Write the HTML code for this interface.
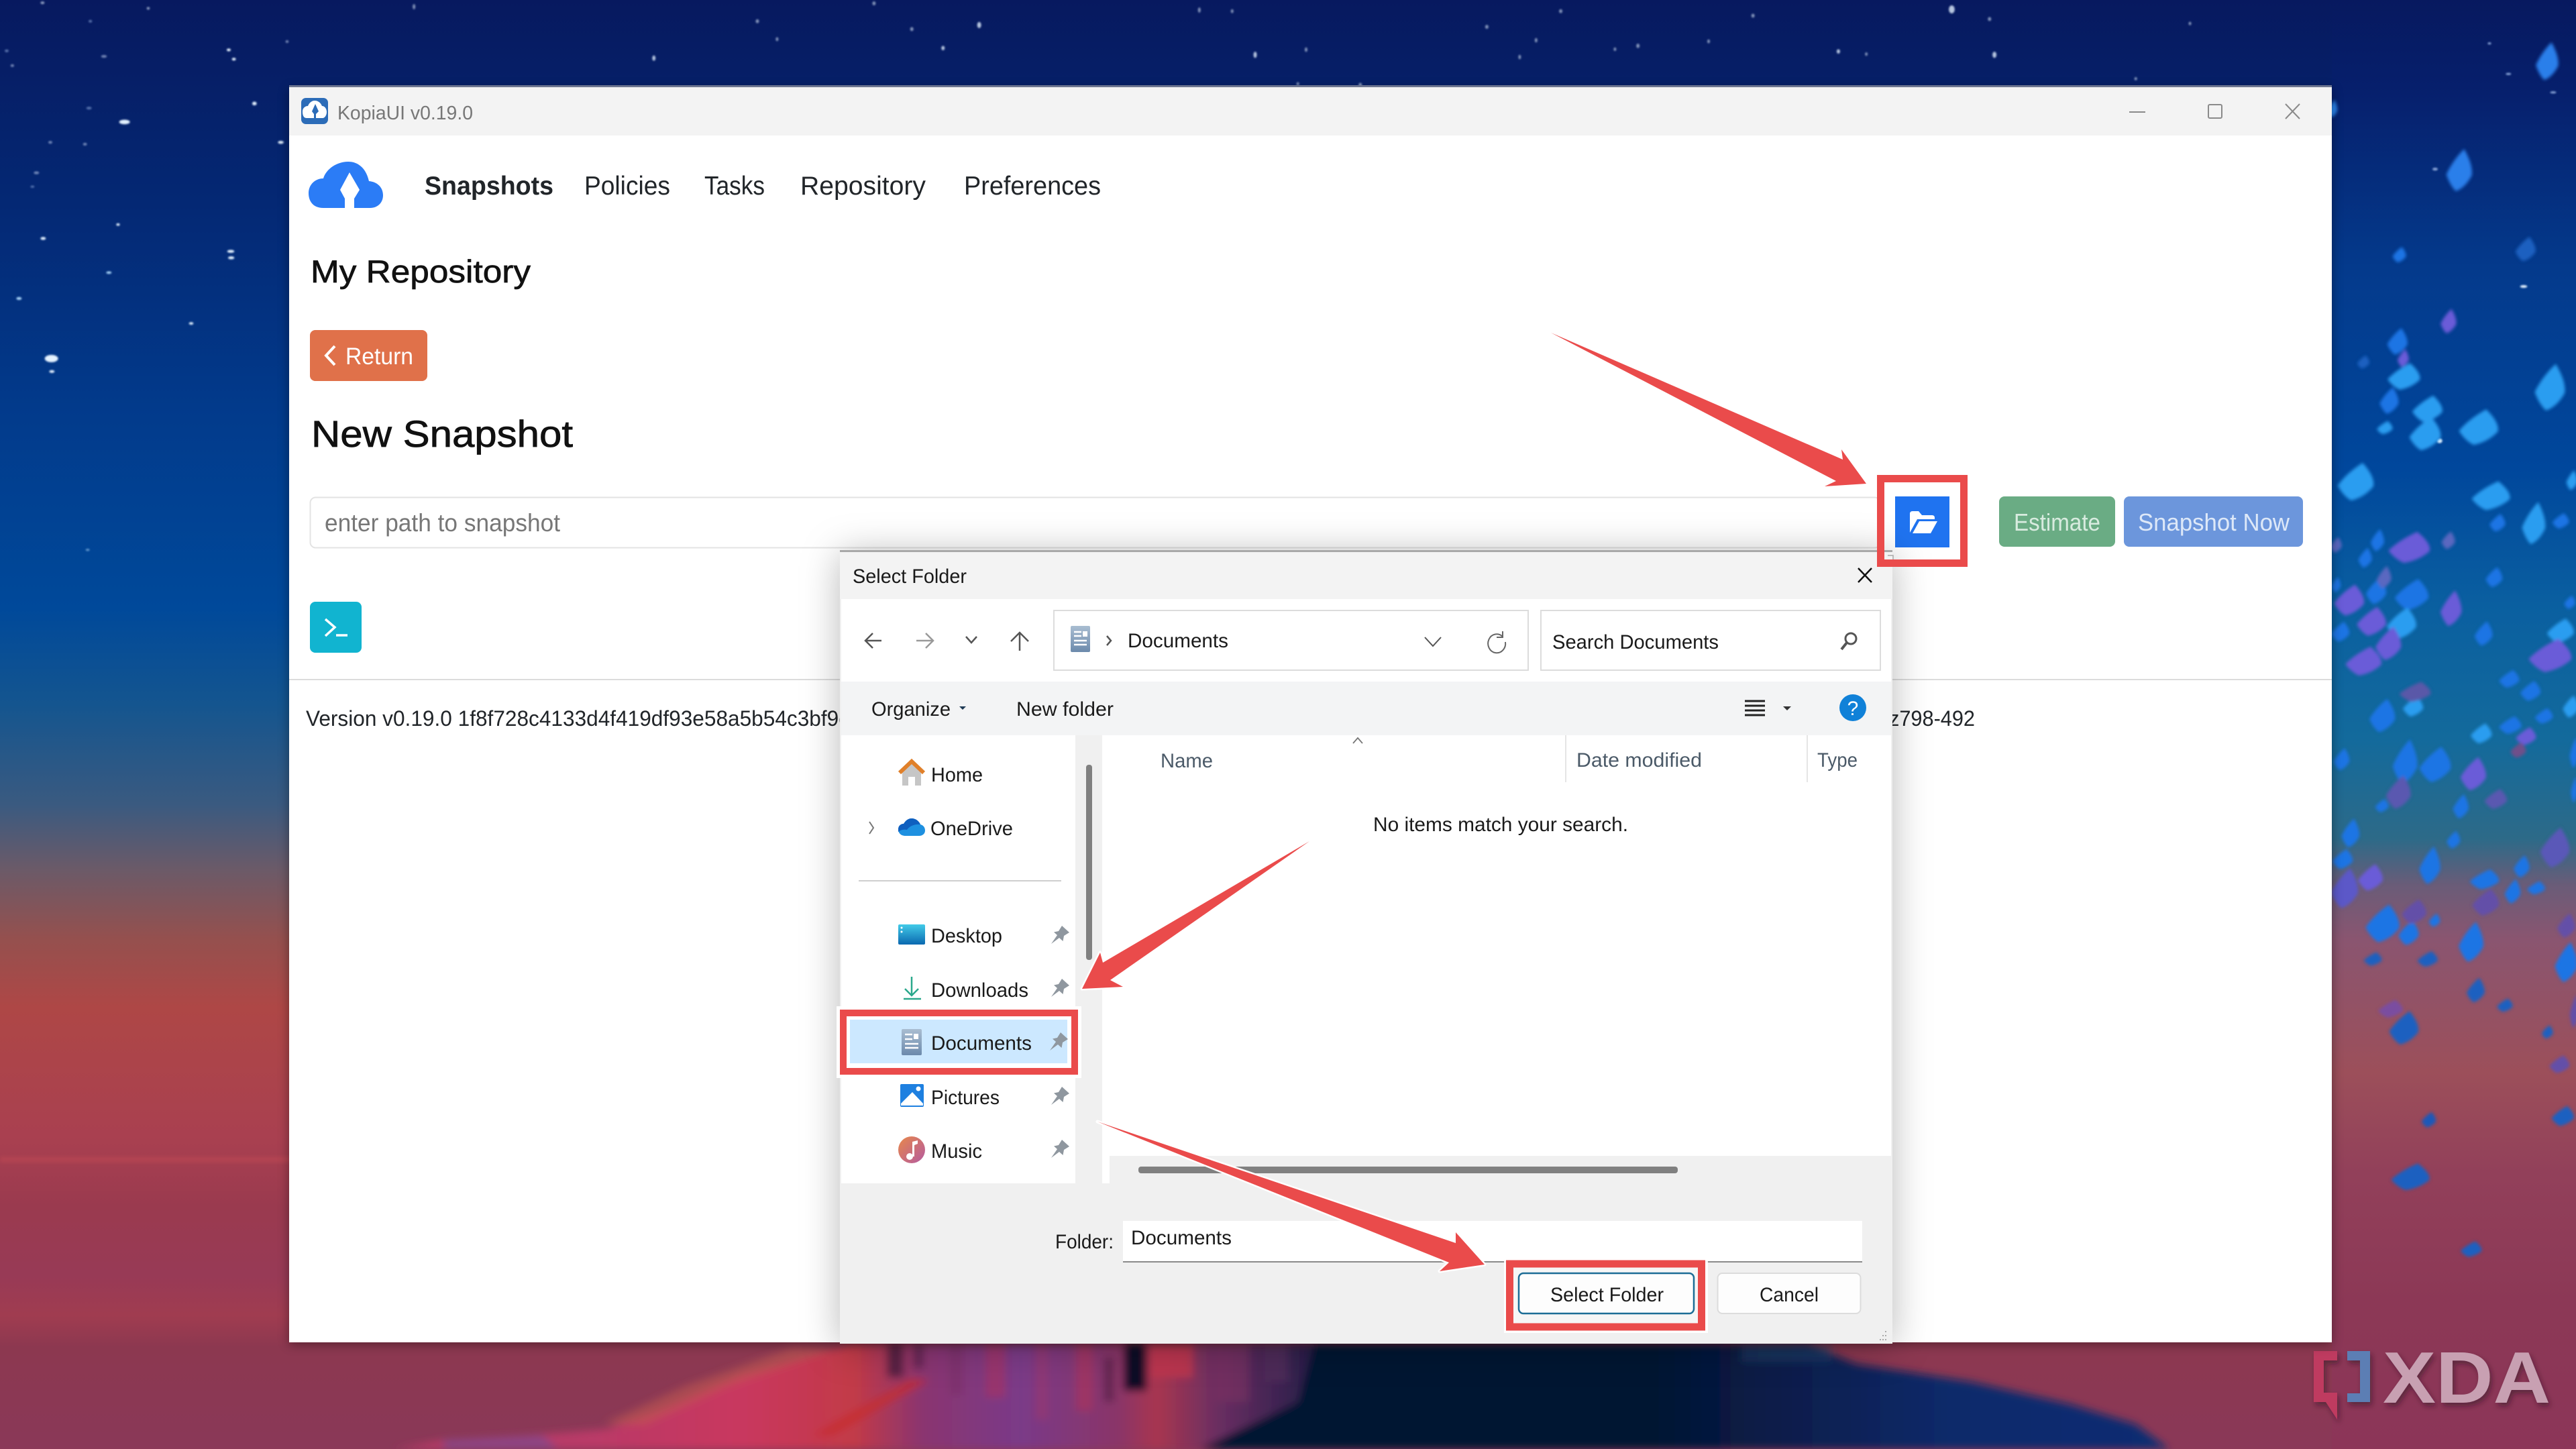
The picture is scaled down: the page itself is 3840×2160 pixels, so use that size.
<!DOCTYPE html>
<html lang="en"><head><meta charset="utf-8"><title>KopiaUI Select Folder</title>
<style>
html,body{margin:0;padding:0;background:#0a1a5c}
svg{display:block;font-family:"Liberation Sans",sans-serif}
.nav{font-size:39px;fill:#212529}
.d{font-size:30px;fill:#1a1a1a}
.h{font-size:30px;fill:#4b5a68}
</style></head><body>
<svg xmlns="http://www.w3.org/2000/svg" width="3840" height="2160" viewBox="0 0 3840 2160">
<defs>
<linearGradient id="bg" x1="0" y1="0" x2="0" y2="2160" gradientUnits="userSpaceOnUse">
<stop offset="0" stop-color="#07195f"/><stop offset=".14" stop-color="#042874"/><stop offset=".28" stop-color="#023a8b"/><stop offset=".42" stop-color="#00499a"/><stop offset=".486" stop-color="#14558f"/><stop offset=".555" stop-color="#3a5a80"/><stop offset=".6" stop-color="#6b5a68"/><stop offset=".648" stop-color="#95504e"/><stop offset=".695" stop-color="#ae4746"/><stop offset=".785" stop-color="#a94050"/><stop offset=".833" stop-color="#9a3a4f"/><stop offset=".88" stop-color="#983a56"/><stop offset=".908" stop-color="#a03c50"/><stop offset=".93" stop-color="#8c3850"/><stop offset="1" stop-color="#8a3858"/>
</linearGradient>
<linearGradient id="bgr" x1="0" y1="0" x2="0" y2="2160" gradientUnits="userSpaceOnUse">
<stop offset="0" stop-color="#07195f"/><stop offset=".06" stop-color="#061f6c"/><stop offset=".185" stop-color="#043a8c"/><stop offset=".324" stop-color="#00479c"/><stop offset=".417" stop-color="#0a5fa0"/><stop offset=".51" stop-color="#136a9c"/><stop offset=".579" stop-color="#2d6a88"/><stop offset=".611" stop-color="#6a5c78"/><stop offset=".648" stop-color="#8a5570"/><stop offset=".74" stop-color="#9c4f5a"/><stop offset=".81" stop-color="#92405a"/><stop offset=".9" stop-color="#8c3856"/><stop offset="1" stop-color="#8c3558"/>
</linearGradient>
<linearGradient id="vl" x1="350" x2="810" y1="0" y2="0" gradientUnits="userSpaceOnUse">
<stop offset="0" stop-color="#b83a68"/><stop offset=".22" stop-color="#c9385f"/><stop offset=".37" stop-color="#c23a48"/><stop offset=".46" stop-color="#8a3570"/><stop offset=".59" stop-color="#7a3a88"/><stop offset=".72" stop-color="#8a3568"/><stop offset=".77" stop-color="#a8364f"/><stop offset=".85" stop-color="#6a2e62"/><stop offset="1" stop-color="#1a1a44"/>
</linearGradient>
<linearGradient id="vn" x1="800" x2="1320" y1="0" y2="0" gradientUnits="userSpaceOnUse">
<stop offset="0" stop-color="#061230"/><stop offset=".4" stop-color="#051433"/><stop offset=".75" stop-color="#0c2a6b"/><stop offset="1" stop-color="#0f2d72"/>
</linearGradient>
<linearGradient id="doc" x1="0" y1="0" x2="0" y2="1"><stop offset="0" stop-color="#a9bdd1"/><stop offset="1" stop-color="#6c8aac"/></linearGradient>
<linearGradient id="desk" x1="0" y1="0" x2="0" y2="1"><stop offset="0" stop-color="#42cbe8"/><stop offset="1" stop-color="#0a68b0"/></linearGradient>
<linearGradient id="mus" x1="0" y1="0" x2="1" y2="1"><stop offset="0" stop-color="#e8884a"/><stop offset="1" stop-color="#b45aa0"/></linearGradient>
<filter id="b2" x="-20%" y="-20%" width="140%" height="140%"><feGaussianBlur stdDeviation="2.500"/></filter>
<filter id="b1" x="-5%" y="-5%" width="110%" height="110%"><feGaussianBlur stdDeviation="1.200"/></filter>
<filter id="b6" x="-5%" y="-5%" width="110%" height="110%"><feGaussianBlur stdDeviation="6"/></filter>
<filter id="b5" x="0" y="-50%" width="100%" height="200%"><feGaussianBlur stdDeviation="3"/></filter>
<filter id="sh" x="-10%" y="-10%" width="120%" height="120%"><feDropShadow dx="0" dy="4" stdDeviation="28" flood-color="#000" flood-opacity=".28"/></filter>
<filter id="ws" x="-5%" y="-5%" width="110%" height="110%"><feDropShadow dx="0" dy="3" stdDeviation="8" flood-color="#000" flood-opacity=".4"/></filter>
<filter id="ls" x="-10%" y="-10%" width="120%" height="130%"><feDropShadow dx="3" dy="5" stdDeviation="4" flood-color="#2a0a20" flood-opacity=".5"/></filter>
<path id="L" d="M.35-1.25Q1.05-.35.95.25Q.45.95-.3 1.15Q-.75.85-1.05.2Q-.55-.6.35-1.25Z"/>
<path id="pin" d="M0 27L9 14L4 9.500L11 8L16 0L27 10L19 15L17.500 23L12 18Z" fill="#8f979f"/>
</defs>

<!-- background -->
<rect width="3840" height="2160" fill="url(#bg)"/>
<rect x="3476" width="364" height="2160" fill="url(#bgr)"/>
<rect x="0" y="1724" width="3476" height="9" fill="#c44b54" opacity=".45" filter="url(#b5)"/>

<!-- volcano -->
<g filter="url(#b6)"><g transform="translate(0,1990) scale(2.449,.3333)">
<polygon points="520,40 450,180 400,340 370,420 320,450 270,470 240,510 810,510 810,40" fill="url(#vl)"/>
<polygon points="800,40 1100,40 1130,130 1200,210 1260,310 1300,400 1320,510 730,510 790,300" fill="url(#vn)"/>
<path d="M495 60L430 230L380 400" stroke="#c25a50" stroke-width="26" fill="none" opacity=".55"/>
<path d="M560 200L500 450" stroke="#c82a2a" stroke-width="12" fill="none" opacity=".7"/>
<rect x="684" y="40" width="14" height="210" fill="#0a0f26"/>
<rect x="700" y="40" width="26" height="150" fill="#c0364f" opacity=".85"/>
<rect x="540" y="40" width="10" height="150" fill="#3a1a38" opacity=".7"/>
<rect x="556" y="40" width="6" height="110" fill="#3a1a38" opacity=".5"/>
<rect x="578" y="40" width="8" height="230" fill="#7a3068" opacity=".6"/>
<rect x="600" y="40" width="12" height="240" fill="#a83560" opacity=".6"/>
<rect x="630" y="40" width="8" height="340" fill="#9a3a70" opacity=".6"/>
<rect x="655" y="40" width="10" height="300" fill="#b0355a" opacity=".55"/>
<rect x="672" y="100" width="6" height="200" fill="#4a2040" opacity=".6"/>
<rect x="740" y="40" width="20" height="260" fill="#7a3060" opacity=".6"/>
<rect x="770" y="40" width="14" height="170" fill="#56305e" opacity=".6"/>
<polygon points="270,470 330,450 340,510 270,510" fill="#7a4a90" opacity=".7"/>
<rect x="1060" y="40" width="55" height="80" fill="#2a4a70" opacity=".45"/>
</g></g>

<!-- stars -->
<g filter="url(#b1)" fill="#e4f2ff">
<g transform="scale(.3333,1.3776)">
<ellipse cx="557" cy="132" rx="24" ry="2.500"/><ellipse cx="230" cy="388" rx="30" ry="4"/><ellipse cx="232" cy="402" rx="12" ry="1.500"/><ellipse cx="1032" cy="272" rx="16" ry="1.600"/><ellipse cx="1034" cy="279" rx="14" ry="1.600"/><ellipse cx="193" cy="258" rx="12" ry="1.600"/><ellipse cx="85" cy="323" rx="12" ry="1.600" fill="#a5d0f5"/><ellipse cx="528" cy="243" rx="8" ry="1.400"/><ellipse cx="487" cy="295" rx="12" ry="1.400" fill="#a5d0f5"/><ellipse cx="855" cy="350" rx="10" ry="1.400"/><ellipse cx="1138" cy="112" rx="10" ry="2"/><ellipse cx="1256" cy="154" rx="13" ry="1.600"/><ellipse cx="1023" cy="54" rx="9" ry="1.500"/><ellipse cx="1046" cy="64" rx="9" ry="1.500"/><g opacity=".6"><ellipse cx="163" cy="187" rx="12" ry="1.500" fill="#b8c8e8"/><ellipse cx="225" cy="154" rx="9" ry="1.500" fill="#b8c8e8"/><ellipse cx="380" cy="156" rx="9" ry="1.500" fill="#b8c8e8"/><ellipse cx="465" cy="61" rx="13" ry="1.500" fill="#b8c8e8"/><ellipse cx="55" cy="71" rx="8" ry="1.500" fill="#b8c8e8"/><ellipse cx="392" cy="595" rx="9" ry="1.200" fill="#a5d0f5"/><ellipse cx="190" cy="3" rx="9" ry="1.500"/><ellipse cx="663" cy="9" rx="7" ry="1.500"/><ellipse cx="145" cy="202" rx="9" ry="1.200" fill="#8aa5d8"/><ellipse cx="398" cy="117" rx="12" ry="1.500" fill="#8aa5d8"/><ellipse cx="30" cy="55" rx="9" ry="1.500" fill="#8aa5d8"/><ellipse cx="1284" cy="45" rx="7" ry="1.500" fill="#b8c8e8"/><ellipse cx="404" cy="23" rx="8" ry="1.500" fill="#8aa5d8"/></g>
</g>
<g transform="scale(2.449,.3333)" opacity=".8">
<ellipse cx="1188" cy="42" rx="1.800" ry="18"/><ellipse cx="596" cy="112" rx="1.200" ry="14"/><ellipse cx="1214" cy="245" rx="1.200" ry="14"/><ellipse cx="764" cy="245" rx="1" ry="14"/><ellipse cx="398" cy="260" rx="1" ry="12"/><ellipse cx="574" cy="215" rx="1" ry="10"/><ellipse cx="1119" cy="230" rx="1" ry="10"/><g opacity=".7"><ellipse cx="905" cy="120" rx="1" ry="9"/><ellipse cx="997" cy="205" rx="1" ry="10"/><ellipse cx="1211" cy="85" rx="1" ry="9"/><ellipse cx="461" cy="95" rx="1" ry="9"/><ellipse cx="555" cy="130" rx="1" ry="9"/><ellipse cx="1067" cy="70" rx="1" ry="9"/><ellipse cx="950" cy="50" rx="1" ry="9"/><ellipse cx="532" cy="15" rx="1" ry="9"/><ellipse cx="828" cy="380" rx="1" ry="10"/><ellipse cx="790" cy="375" rx=".8" ry="8"/><ellipse cx="1136" cy="242" rx=".8" ry="8"/><ellipse cx="983" cy="220" rx=".8" ry="8"/><ellipse cx="935" cy="180" rx=".8" ry="10"/><ellipse cx="925" cy="255" rx=".8" ry="10"/><ellipse cx="795" cy="222" rx=".8" ry="10"/><ellipse cx="473" cy="175" rx=".8" ry="9"/><ellipse cx="252" cy="30" rx=".8" ry="12"/><ellipse cx="1040" cy="185" rx=".8" ry="9"/><ellipse cx="730" cy="45" rx=".8" ry="12"/><ellipse cx="750" cy="50" rx=".8" ry="9"/><ellipse cx="1300" cy="352" rx=".8" ry="7"/><ellipse cx="1333" cy="105" rx=".8" ry="8"/></g>
</g>
<g transform="translate(3476,0) scale(.3333,1.3776)"><ellipse cx="858" cy="310" rx="16" ry="1.500"/><ellipse cx="462" cy="183" rx="12" ry="1.500" fill="#8aa5d8"/><ellipse cx="482" cy="477" rx="12" ry="2.500"/><ellipse cx="705" cy="47" rx="8" ry="1.200" fill="#8aa5d8"/><ellipse cx="790" cy="80" rx="12" ry="1.200" fill="#8aa5d8"/><ellipse cx="990" cy="100" rx="14" ry="1.200" fill="#8aa5d8"/></g>
</g>

<!-- leaves -->
<g filter="url(#b2)"><g transform="translate(3476,0) scale(.3333,1.3776)">
<g fill="#1c74e4">
<use href="#L" transform="translate(5,118) scale(20,8)" fill="#2a86ee"/><use href="#L" transform="translate(572,185) scale(57,19)" fill="#2a7fea"/><use href="#L" transform="translate(965,67) scale(50,17)" fill="#2a7fea"/><use href="#L" transform="translate(303,276) scale(30,7)"/><use href="#L" transform="translate(868,270) scale(45,11)" fill="#1a60c0"/><use href="#L" transform="translate(295,370) scale(45,12)"/><use href="#L" transform="translate(142,392) scale(27,6)" fill="#1a60c0"/><use href="#L" transform="translate(258,434) scale(42,12)"/><use href="#L" transform="translate(742,566) scale(35,8)"/><use href="#L" transform="translate(1025,564) scale(37,7)"/><use href="#L" transform="translate(150,604) scale(30,9)"/><use href="#L" transform="translate(205,585) scale(30,10)"/><use href="#L" transform="translate(20,633) scale(20,7)"/><use href="#L" transform="translate(200,640) scale(45,12)"/><use href="#L" transform="translate(360,644) scale(75,14)"/><use href="#L" transform="translate(727,625) scale(37,9)"/><use href="#L" transform="translate(1065,652) scale(25,6)"/><use href="#L" transform="translate(40,684) scale(40,9)"/><use href="#L" transform="translate(680,686) scale(40,11)"/><use href="#L" transform="translate(795,735) scale(45,8)"/><use href="#L" transform="translate(890,748) scale(45,9)"/><use href="#L" transform="translate(228,775) scale(57,15)"/><use href="#L" transform="translate(950,775) scale(40,7)"/><use href="#L" transform="translate(800,785) scale(50,8)"/><use href="#L" transform="translate(45,822) scale(35,10)"/><use href="#L" transform="translate(330,825) scale(55,20)"/><use href="#L" transform="translate(465,828) scale(70,16)"/><use href="#L" transform="translate(1085,815) scale(20,14)"/><use href="#L" transform="translate(225,872) scale(30,6)"/><use href="#L" transform="translate(578,873) scale(35,11)"/><use href="#L" transform="translate(1085,855) scale(15,12)"/><use href="#L" transform="translate(85,902) scale(40,13)"/><use href="#L" transform="translate(545,909) scale(30,8)"/><use href="#L" transform="translate(50,930) scale(45,9)"/><use href="#L" transform="translate(440,937) scale(47,17)"/><use href="#L" transform="translate(850,938) scale(35,10)"/><use href="#L" transform="translate(685,952) scale(65,9)"/><use href="#L" transform="translate(810,965) scale(35,11)"/><use href="#L" transform="translate(915,961) scale(40,6)"/><use href="#L" transform="translate(230,1000) scale(75,17)"/><use href="#L" transform="translate(345,1010) scale(45,11)"/><use href="#L" transform="translate(460,996) scale(25,6)"/><use href="#L" transform="translate(625,1020) scale(55,18)"/><use href="#L" transform="translate(1050,1042) scale(50,18)"/><use href="#L" transform="translate(185,1038) scale(40,6)" fill="#1a60c0"/><use href="#L" transform="translate(430,1038) scale(45,7)" fill="#1a60c0"/><use href="#L" transform="translate(645,1072) scale(40,11)" fill="#1a60c0"/><use href="#L" transform="translate(775,1088) scale(35,6)" fill="#1a60c0"/><use href="#L" transform="translate(965,1117) scale(25,6)" fill="#1a60c0"/><use href="#L" transform="translate(325,1113) scale(65,15)" fill="#1a60c0"/><use href="#L" transform="translate(435,1212) scale(32,7)" fill="#1a58b8"/><use href="#L" transform="translate(1035,1208) scale(50,9)" fill="#1a60c0"/><use href="#L" transform="translate(355,1274) scale(85,12)" fill="#1a60c0"/><use href="#L" transform="translate(625,1352) scale(47,7)" fill="#1a60c0"/>
</g>
<g fill="#2a9df0">
<use href="#L" transform="translate(325,408) scale(72,12)"/><use href="#L" transform="translate(430,443) scale(67,12)"/><use href="#L" transform="translate(238,463) scale(35,6)"/><use href="#L" transform="translate(420,470) scale(70,15)"/><use href="#L" transform="translate(660,463) scale(87,16)"/><use href="#L" transform="translate(978,420) scale(67,21)"/><use href="#L" transform="translate(110,522) scale(80,17)"/><use href="#L" transform="translate(715,537) scale(85,13)"/><use href="#L" transform="translate(905,567) scale(52,19)"/><use href="#L" transform="translate(1075,520) scale(25,9)"/><use href="#L" transform="translate(315,675) scale(65,14)"/><use href="#L" transform="translate(1025,683) scale(60,11)"/><use href="#L" transform="translate(365,765) scale(45,9)"/><use href="#L" transform="translate(670,794) scale(47,9)"/><use href="#L" transform="translate(1070,765) scale(35,10)"/>
</g>
<g fill="#6a5cd8">
<use href="#L" transform="translate(523,348) scale(35,11)"/><use href="#L" transform="translate(320,388) scale(25,8)"/><use href="#L" transform="translate(20,590) scale(25,7)" fill="#5a68c0"/><use href="#L" transform="translate(350,593) scale(92,14)"/><use href="#L" transform="translate(522,585) scale(30,8)" fill="#5a68c0"/><use href="#L" transform="translate(235,625) scale(32,10)" fill="#5a68c0"/><use href="#L" transform="translate(80,650) scale(67,14)"/><use href="#L" transform="translate(535,659) scale(47,16)"/><use href="#L" transform="translate(180,673) scale(65,13)"/><use href="#L" transform="translate(145,716) scale(80,13)"/><use href="#L" transform="translate(255,697) scale(57,15)"/><use href="#L" transform="translate(980,710) scale(95,15)"/><use href="#L" transform="translate(375,749) scale(70,9)" fill="#5a58a8"/><use href="#L" transform="translate(870,797) scale(45,8)"/><use href="#L" transform="translate(635,838) scale(57,15)"/><use href="#L" transform="translate(835,812) scale(35,7)" fill="#70508a"/><use href="#L" transform="translate(300,858) scale(55,15)" fill="#5a58b0"/><use href="#L" transform="translate(735,865) scale(50,9)" fill="#5a58b0"/><use href="#L" transform="translate(175,950) scale(55,12)"/><use href="#L" transform="translate(60,962) scale(60,18)" fill="#5c58c8"/><use href="#L" transform="translate(1000,918) scale(65,18)" fill="#5a58b8"/><use href="#L" transform="translate(690,977) scale(60,12)" fill="#6450a8"/><use href="#L" transform="translate(370,987) scale(55,11)" fill="#6450a8"/><use href="#L" transform="translate(1050,1002) scale(40,11)" fill="#6450a8"/><use href="#L" transform="translate(1085,1095) scale(20,15)" fill="#6450a8"/><use href="#L" transform="translate(265,1092) scale(55,8)" fill="#7a4ea0"/><use href="#L" transform="translate(1020,1152) scale(45,8)" fill="#6450a8"/>
</g>
</g></g>

<!-- XDA -->
<g filter="url(#ls)">
<polygon points="3449,2014 3484,2014 3484,2028 3464,2028 3464,2076 3484,2076 3484,2116 3467,2090 3449,2090" fill="#bf3a60"/>
<polygon points="3499,2014 3533,2014 3533,2090 3499,2090 3499,2077 3518,2077 3518,2028 3499,2028" fill="#5b7eb4"/>
<text x="3552" y="2091" font-size="109" font-weight="700" fill="#c8a0b2" textLength="250" lengthAdjust="spacingAndGlyphs">XDA</text>
</g>

<!-- window -->
<g filter="url(#ws)"><rect x="431" y="130" width="3045" height="1871" fill="#fff"/></g>
<rect x="431" y="127" width="3045" height="3" fill="#6d7690"/>
<rect x="431" y="130" width="3045" height="72" fill="#f3f3f3"/>
<rect x="449" y="146" width="40" height="39" rx="7" fill="#2c6cb8"/>
<path d="M457 176C451 176 451 168 451 166C451 161 455 158 459 158C461 153 465 150 469 150C474 150 478 153 480 158C484 158 487 162 487 167C487 172 484 176 481 176Z" fill="#fff"/>
<path d="M470 155L475 166L471 170V176H468V170L465 166Z" fill="#2c6cb8"/>
<text x="503" y="178" font-size="29" fill="#777" textLength="202" lengthAdjust="spacingAndGlyphs">KopiaUI v0.19.0</text>
<g stroke="#8a8a8a" stroke-width="2" fill="none"><path d="M3174 167H3198"/><rect x="3292" y="156" width="20" height="20" rx="2"/><path d="M3407 155L3428 177M3428 155L3407 177"/></g>

<path d="M482 310C466 310 460 299 460 288C460 275 470 266 482 266C486 252 502 241 519 241C535 241 546 252 550 270C562 271 571 279 571 291C571 303 562 310 552 310Z" fill="#2b7cf6"/>
<path d="M521 257L536 283L528 296V310H514V296L507 283Z" fill="#fff"/>
<text class="nav" x="633" y="290" font-weight="700" fill="#111" textLength="192" lengthAdjust="spacingAndGlyphs">Snapshots</text>
<text class="nav" x="871" y="290" textLength="128" lengthAdjust="spacingAndGlyphs">Policies</text>
<text class="nav" x="1050" y="290" textLength="90" lengthAdjust="spacingAndGlyphs">Tasks</text>
<text class="nav" x="1193" y="290" textLength="187" lengthAdjust="spacingAndGlyphs">Repository</text>
<text class="nav" x="1437" y="290" textLength="204" lengthAdjust="spacingAndGlyphs">Preferences</text>
<text x="463" y="421" font-size="47" fill="#111" stroke="#111" stroke-width=".7" textLength="328" lengthAdjust="spacingAndGlyphs">My Repository</text>
<rect x="462" y="492" width="175" height="76" rx="8" fill="#e0714a"/>
<path d="M499 516L486 530L499 544" stroke="#fff" stroke-width="4" fill="none"/>
<text x="515" y="543" font-size="35" fill="#fff" textLength="101" lengthAdjust="spacingAndGlyphs">Return</text>
<text x="464" y="666" font-size="56" fill="#111" stroke="#111" stroke-width=".8" textLength="390" lengthAdjust="spacingAndGlyphs">New Snapshot</text>
<rect x="462.500" y="741.500" width="2340" height="75" rx="8" fill="#fff" stroke="#e3e3e3" stroke-width="2"/>
<text x="484" y="792" font-size="37" fill="#777" textLength="351" lengthAdjust="spacingAndGlyphs">enter path to snapshot</text>
<rect x="2825" y="740" width="81" height="76" fill="#1f73f0"/>
<path d="M2847 794V766Q2847 762 2851 762H2860L2865 768H2880Q2884 768 2884 772V774H2858Z M2851 795L2861 777H2888L2878 795Z" fill="#fff"/>
<rect x="2980" y="740" width="173" height="75" rx="8" fill="#6aac84"/>
<text x="3002" y="791" font-size="36" fill="#d8ebdf" textLength="129" lengthAdjust="spacingAndGlyphs">Estimate</text>
<rect x="3166" y="740" width="267" height="75" rx="8" fill="#6c96dc"/>
<text x="3187" y="791" font-size="36" fill="#dde8f8" textLength="226" lengthAdjust="spacingAndGlyphs">Snapshot Now</text>
<rect x="462" y="897" width="77" height="76" rx="8" fill="#11b4d0"/>
<path d="M485 923L499 935L485 948M501 947H518" stroke="#fff" stroke-width="3.500" fill="none"/>
<rect x="431" y="1012" width="3045" height="2" fill="#dcdcdc"/>
<text x="456" y="1082" font-size="32" fill="#212529" textLength="810" lengthAdjust="spacingAndGlyphs">Version v0.19.0 1f8f728c4133d4f419df93e58a5b54c3bf9c</text>
<text x="2816" y="1082" font-size="32" fill="#212529" textLength="128" lengthAdjust="spacingAndGlyphs">z798-492</text>

<!-- dialog -->
<rect x="1252" y="821" width="1569" height="1182" fill="#f0f0f0" filter="url(#sh)"/>
<rect x="1252" y="820" width="1569" height="3" fill="#a8a8a8"/>
<rect x="1252" y="823" width="1569" height="70" fill="#f3f3f3"/>
<text x="1271" y="869" class="d" fill="#111" textLength="170" lengthAdjust="spacingAndGlyphs">Select Folder</text>
<path d="M2770 847L2790 868M2790 847L2770 868" stroke="#111" stroke-width="2.500" fill="none"/>
<rect x="1254" y="893" width="1565" height="123" fill="#fff"/>
<g stroke-width="2.500" fill="none" stroke="#555"><path d="M1314 955H1290M1301 944L1290 955L1301 966"/><path d="M1366 955H1391M1380 944L1391 955L1380 966" stroke="#999"/><path d="M1440 949L1448 958L1456 949"/><path d="M1520 970V943M1507 956L1520 943L1533 956"/></g>
<rect x="1571" y="910" width="707" height="89" fill="#fff" stroke="#dcdcdc" stroke-width="2"/>
<rect x="1596" y="933" width="29" height="39" rx="2" fill="url(#doc)"/><path d="M1601 942H1612M1601 948H1612M1601 955H1620M1601 961H1620" stroke="#fff" stroke-width="2.500"/><rect x="1614" y="941" width="7" height="8" fill="#fff"/>
<path d="M1650 948L1656 955L1650 962" stroke="#555" stroke-width="2.500" fill="none"/>
<text x="1681" y="965" class="d" textLength="150" lengthAdjust="spacingAndGlyphs">Documents</text>
<path d="M2124 950L2136 963L2148 950" stroke="#555" stroke-width="2" fill="none"/>
<path d="M2240 949A13 14 0 1 0 2244 957M2240 941V950H2231" stroke="#666" stroke-width="2" fill="none"/>
<rect x="2297" y="910" width="506" height="89" fill="#fff" stroke="#dcdcdc" stroke-width="2"/>
<text x="2314" y="967" class="d" fill="#666" textLength="248" lengthAdjust="spacingAndGlyphs">Search Documents</text>
<circle cx="2759" cy="952" r="8" fill="none" stroke="#555" stroke-width="3"/><path d="M2753 958L2745 968" stroke="#555" stroke-width="4"/>
<rect x="1254" y="1016" width="1565" height="80" fill="#f3f4f5"/>
<text x="1299" y="1067" class="d" fill="#1f3a55" textLength="118" lengthAdjust="spacingAndGlyphs">Organize</text>
<polygon points="1430,1053 1440,1053 1435,1058" fill="#1f3a55"/>
<text x="1515" y="1067" class="d" fill="#1f3a55" textLength="145" lengthAdjust="spacingAndGlyphs">New folder</text>
<path d="M2601 1045H2631M2601 1052H2631M2601 1059H2631M2601 1066H2631" stroke="#222" stroke-width="3"/>
<polygon points="2658,1053 2670,1053 2664,1059" fill="#333"/>
<circle cx="2762" cy="1055" r="20" fill="#1081d8"/>
<text x="2762" y="1066" font-size="30" fill="#fff" text-anchor="middle">?</text>
<rect x="1254" y="1096" width="349" height="668" fill="#fff"/>
<rect x="1603" y="1096" width="40" height="668" fill="#f0f0f0"/>
<rect x="1619" y="1140" width="9" height="291" rx="4" fill="#808080"/>
<rect x="1643" y="1096" width="11" height="668" fill="#fff"/>
<rect x="1654" y="1096" width="1165" height="627" fill="#fff"/>
<path d="M2017 1108L2024 1100L2031 1108" stroke="#777" stroke-width="1.800" fill="none"/>
<path d="M2334 1096V1166M2694 1096V1166" stroke="#e5e5e5" stroke-width="2"/>
<text x="1730" y="1144" class="h" textLength="78" lengthAdjust="spacingAndGlyphs">Name</text>
<text x="2350" y="1143" class="h" textLength="187" lengthAdjust="spacingAndGlyphs">Date modified</text>
<text x="2709" y="1143" class="h" textLength="60" lengthAdjust="spacingAndGlyphs">Type</text>
<text x="2047" y="1239" class="d" fill="#555" textLength="380" lengthAdjust="spacingAndGlyphs">No items match your search.</text>
<rect x="1697" y="1739" width="804" height="10" rx="4" fill="#808080"/>

<!-- sidebar -->
<polygon points="1345,1150 1359,1137 1373,1150 1373,1171 1364,1171 1364,1158 1354,1158 1354,1171 1345,1171" fill="#c6c6c6"/>
<path d="M1341 1152L1359 1135L1377 1152" stroke="#e0802a" stroke-width="6" fill="none"/>
<text x="1388" y="1165" class="d" textLength="77" lengthAdjust="spacingAndGlyphs">Home</text>
<path d="M1296 1225L1302 1234L1296 1243" stroke="#777" stroke-width="2" fill="none"/>
<path d="M1350 1246C1342 1246 1339 1241 1339 1236C1339 1231 1343 1228 1347 1228C1350 1223 1354 1220 1359 1220C1365 1220 1370 1224 1372 1229C1376 1230 1379 1233 1379 1238C1379 1243 1375 1246 1370 1246Z" fill="#1e90e0"/>
<path d="M1339 1236C1339 1231 1343 1228 1347 1228C1350 1223 1354 1220 1359 1220C1365 1220 1370 1224 1372 1229C1363 1228 1355 1232 1352 1237C1347 1236 1343 1237 1339 1240Z" fill="#0f5fbf"/>
<text x="1387" y="1245" class="d" textLength="123" lengthAdjust="spacingAndGlyphs">OneDrive</text>
<rect x="1280" y="1312" width="302" height="2" fill="#cfcfcf"/>
<rect x="1339" y="1378" width="40" height="30" rx="2" fill="url(#desk)"/><circle cx="1344" cy="1383" r="1.500" fill="#fff"/><circle cx="1344" cy="1389" r="1.500" fill="#fff"/>
<text x="1388" y="1405" class="d" textLength="106" lengthAdjust="spacingAndGlyphs">Desktop</text>
<path d="M1359 1456V1484M1349 1474L1359 1484L1369 1474M1347 1489H1373" stroke="#2aa88c" stroke-width="2.500" fill="none"/>
<text x="1388" y="1486" class="d" textLength="145" lengthAdjust="spacingAndGlyphs">Downloads</text>
<rect x="1247" y="1500" width="365" height="107" fill="#fff"/>
<rect x="1267" y="1520" width="324" height="65" fill="#cce8ff"/>
<rect x="1257" y="1510" width="345" height="87" fill="none" stroke="#ea4b4b" stroke-width="10"/>
<rect x="1344" y="1534" width="30" height="39" rx="2" fill="url(#doc)"/><path d="M1349 1542H1360M1349 1549H1360M1349 1556H1369M1349 1562H1369" stroke="#fff" stroke-width="2.500"/><rect x="1362" y="1541" width="7" height="8" fill="#fff"/>
<text x="1388" y="1565" class="d" textLength="150" lengthAdjust="spacingAndGlyphs">Documents</text>
<rect x="1342" y="1616" width="35" height="34" rx="2" fill="#1e80e0"/><path d="M1343 1645L1360 1628L1376 1645V1648H1343Z" fill="#fff"/><circle cx="1369" cy="1623" r="3.500" fill="#fff"/>
<text x="1388" y="1646" class="d" textLength="102" lengthAdjust="spacingAndGlyphs">Pictures</text>
<circle cx="1359" cy="1714" r="20" fill="url(#mus)"/><path d="M1360 1724V1702L1368 1700V1705L1363 1707V1724" fill="#fff"/><circle cx="1356" cy="1724" r="5" fill="#fff"/>
<text x="1388" y="1726" class="d" textLength="76" lengthAdjust="spacingAndGlyphs">Music</text>
<use href="#pin" x="1567" y="1380"/><use href="#pin" x="1567" y="1459"/><use href="#pin" x="1565" y="1539"/><use href="#pin" x="1567" y="1620"/><use href="#pin" x="1567" y="1699"/>

<!-- dialog bottom -->
<text x="1573" y="1861" class="d" textLength="87" lengthAdjust="spacingAndGlyphs">Folder:</text>
<rect x="1674" y="1820" width="1102" height="61" fill="#fff"/><rect x="1674" y="1880" width="1102" height="2" fill="#8a8a8a"/>
<text x="1686" y="1855" class="d" textLength="150" lengthAdjust="spacingAndGlyphs">Documents</text>
<rect x="2242" y="1875" width="304" height="112" fill="#fff" opacity=".9"/>
<rect x="2250.500" y="1884" width="286" height="94" fill="#f6f6f6" stroke="#ea4b4b" stroke-width="11"/>
<rect x="2264" y="1898" width="261" height="60" rx="7" fill="#fdfdfd" stroke="#1c6d96" stroke-width="2.500"/>
<text x="2311" y="1940" class="d" fill="#111" textLength="169" lengthAdjust="spacingAndGlyphs">Select Folder</text>
<rect x="2560.500" y="1898" width="213" height="60" rx="7" fill="#fdfdfd" stroke="#dcdcdc" stroke-width="2"/>
<text x="2623" y="1940" class="d" fill="#111" textLength="88" lengthAdjust="spacingAndGlyphs">Cancel</text>
<g fill="#aaa"><rect x="2810" y="1984" width="2" height="2"/><rect x="2806" y="1990" width="2" height="2"/><rect x="2810" y="1990" width="2" height="2"/><rect x="2802" y="1996" width="2" height="2"/><rect x="2806" y="1996" width="2" height="2"/><rect x="2810" y="1996" width="2" height="2"/></g>

<!-- annotations -->
<g fill="#ea4b4b" stroke="#fff" stroke-width="5" paint-order="stroke" stroke-linejoin="round">
<polygon points="1952,1254 1644,1435 1640,1420 1613,1474 1674,1471 1655,1461"/>
<polygon points="1636,1672 2170,1853 2170,1837 2213,1885 2146,1895 2160,1882"/>
<polygon points="2312,496 2747,685 2745,670 2782,721 2720,725 2737,717"/>
</g>
<rect x="2803.500" y="713.500" width="124" height="126" fill="none" stroke="#ea4b4b" stroke-width="11"/>
<path d="M2814 828H2822V834" stroke="#aaa" stroke-width="1.500" fill="none"/>
</svg>
</body></html>
